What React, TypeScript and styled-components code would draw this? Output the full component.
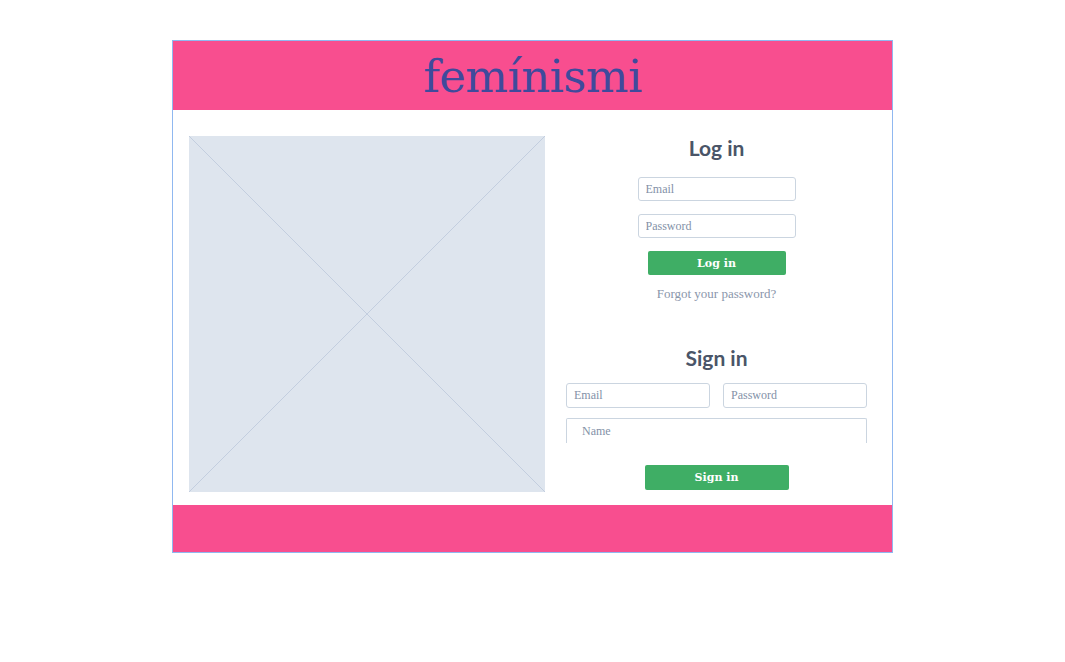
import styled, { createGlobalStyle } from "styled-components";

const GlobalStyle = createGlobalStyle`
    body {
        margin: 0;
        background: #ffffff;
        font-family: "Liberation Serif", serif;
    }
`;

const Page = styled.div`
    display: flex;
    justify-content: center;
    padding-top: 40px;
`;

const Frame = styled.div`
    width: 719px;
    border: 1px solid #90b8f0;
    display: flex;
    flex-direction: column;
`;

const Header = styled.header`
    background: #f84e8f;
    height: 69px;
    display: flex;
    justify-content: center;
    align-items: center;
    & > h1 {
        margin: 0;
        font-family: "DejaVu Serif", serif;
        font-weight: 400;
        font-size: 45px;
        color: #3f4a9c;
        letter-spacing: -0.6px;
        padding-top: 2px;
    }
`;

const Footer = styled.footer`
    background: #f84e8f;
    height: 47px;
`;

const Content = styled.main`
    display: flex;
    padding: 26px 25px 13px 16px;
    gap: 21px;
`;

const Placeholder = styled.div`
    width: 356px;
    height: 356px;
    flex-shrink: 0;
    background: #dee5ee;
    & > svg {
        display: block;
    }
`;

const Forms = styled.div`
    flex: 1;
    display: flex;
    flex-direction: column;
    align-items: center;
`;

const Title = styled.h2<{ $top?: number; $bottom?: number }>`
    margin: ${(p) => p.$top ?? 0}px 0 ${(p) => p.$bottom ?? 0}px;
    font-family: Lato, sans-serif;
    font-weight: 700;
    font-size: 21px;
    color: #4a5568;
    line-height: 24px;
`;

const Input = styled.input<{ $height?: number; $indent?: number; $noBottom?: boolean }>`
    box-sizing: border-box;
    width: 100%;
    height: ${(p) => p.$height ?? 25}px;
    border: 1px solid #cbd5e0;
    border-bottom: ${(p) => (p.$noBottom ? "none" : "1px solid #cbd5e0")};
    border-radius: ${(p) => (p.$noBottom ? "2px 2px 0 0" : "3px")};
    padding: 0 0 0 ${(p) => p.$indent ?? 7}px;
    font-family: "Liberation Serif", serif;
    font-size: 12px;
    color: #4a5568;
    outline: none;
    &::placeholder {
        color: #8391a7;
    }
`;

const Button = styled.button<{ $width: number; $height: number }>`
    width: ${(p) => p.$width}px;
    height: ${(p) => p.$height}px;
    border: none;
    border-radius: 2px;
    background: #3fae65;
    color: #ffffff;
    font-family: "DejaVu Serif", serif;
    font-weight: 700;
    font-size: 11px;
    cursor: pointer;
`;

const LoginForm = styled.form`
    display: flex;
    flex-direction: column;
    align-items: center;
    width: 158px;
    gap: 13px;
    margin-top: 17px;
`;

const Forgot = styled.a`
    margin-top: 11px;
    font-family: "Liberation Serif", serif;
    font-size: 13px;
    line-height: 15px;
    color: #8a96ab;
    text-decoration: none;
`;

const SignForm = styled.form`
    width: 100%;
    display: flex;
    flex-direction: column;
    align-items: center;
`;

const Row = styled.div`
    width: 100%;
    display: grid;
    grid-template-columns: 1fr 1fr;
    gap: 13px;
    margin-bottom: 10px;
`;

const SignButton = styled(Button)`
    margin-top: 22px;
`;

const App = (): JSX.Element => {
    return (
        <Page>
            <GlobalStyle />
            <Frame>
                <Header>
                    <h1>femínismi</h1>
                </Header>
                <Content>
                    <Placeholder>
                        <svg width="356" height="356" viewBox="0 0 356 356">
                            <line x1="0" y1="0" x2="356" y2="356" stroke="#c3cedf" strokeWidth="1" />
                            <line x1="356" y1="0" x2="0" y2="356" stroke="#c3cedf" strokeWidth="1" />
                        </svg>
                    </Placeholder>
                    <Forms>
                        <Title>Log in</Title>
                        <LoginForm onSubmit={(e) => e.preventDefault()}>
                            <Input type="email" placeholder="Email" $height={24} />
                            <Input type="password" placeholder="Password" $height={24} />
                            <Button $width={138} $height={24}>Log in</Button>
                        </LoginForm>
                        <Forgot href="#">Forgot your password?</Forgot>
                        <SignForm onSubmit={(e) => e.preventDefault()}>
                            <Title $top={45} $bottom={13}>Sign in</Title>
                            <Row>
                                <Input type="email" placeholder="Email" />
                                <Input type="password" placeholder="Password" />
                            </Row>
                            <Input type="text" placeholder="Name" $indent={15} $noBottom />
                            <SignButton $width={144} $height={25}>Sign in</SignButton>
                        </SignForm>
                    </Forms>
                </Content>
                <Footer />
            </Frame>
        </Page>
    );
};

export default App;
